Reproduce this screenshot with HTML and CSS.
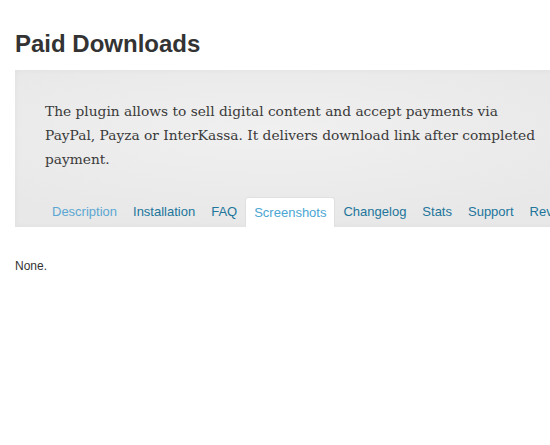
FILE: index.html
```html
<!DOCTYPE html>
<html lang="en">
<head>
    <meta charset="UTF-8">
    <title>Paid Downloads</title>
    <link rel="stylesheet" href="styles.css">
</head>
<body>
    <div id="plugin">
        <h2 class="plugin-title">Paid Downloads</h2>
        <div class="plugin-head">
            <p class="plugin-desc">The plugin allows to sell digital content and accept payments via PayPal, Payza or InterKassa. It delivers download link after completed payment.</p>
            <ul class="tabs">
                <li class="tab tab-visited"><a href="#">Description</a></li>
                <li class="tab"><a href="#">Installation</a></li>
                <li class="tab"><a href="#">FAQ</a></li>
                <li class="tab tab-active"><a href="#">Screenshots</a></li>
                <li class="tab"><a href="#">Changelog</a></li>
                <li class="tab"><a href="#">Stats</a></li>
                <li class="tab"><a href="#">Support</a></li>
                <li class="tab"><a href="#">Reviews</a></li>
            </ul>
        </div>
        <div class="plugin-body">
            <p>None.</p>
        </div>
    </div>
</body>
</html>
```

FILE: styles.css
```css
body {
    margin: 0;
    padding: 0 15px;
    font-family: 'Liberation Sans', Arial, sans-serif;
    color: #333;
    background-color: #fff;
}
#plugin {
    width: 640px; /* wider than the window */
}
.plugin-title {
    margin: 0;
    padding: 29px 0 0;
    height: 41px;
    font-size: 24px;
    line-height: 30px;
    font-weight: bold;
    color: #333;
}
.plugin-head {
    background-color: #e9e9e9;
    background-image: radial-gradient(ellipse at 40% 40%, #f0f0f0 0%, #e8e8e8 70%);
    box-shadow: inset 0 0 6px rgba(0, 0, 0, 0.04);
    padding: 29px 0 0 30px;
}
.plugin-desc {
    margin: 0;
    width: 498px;
    font-family: 'DejaVu Serif', Georgia, serif;
    font-size: 13.75px;
    line-height: 24px;
    color: #3a3a3a;
}
.tabs {
    list-style: none;
    margin: 26px 0 0 -1px;
    padding: 0;
    display: flex;
    white-space: nowrap;
}
.tab a {
    display: block;
    padding: 0 8px;
    height: 30px;
    line-height: 30px;
    border-radius: 3px 3px 0 0;
    font-size: 13px;
    color: #21759b;
    text-decoration: none;
}
.tab-visited a {
    color: #5ba7d2;
}
.tab-active a {
    height: 29px;
    line-height: 29px;
    background-color: #fff;
    border: 1px solid #e0e0e0;
    border-bottom: none;
    color: #4aa6d3;
}
.plugin-body {
    padding-top: 32px;
    font-size: 12px;
    color: #333;
}
.plugin-body p {
    margin: 0;
}
```
